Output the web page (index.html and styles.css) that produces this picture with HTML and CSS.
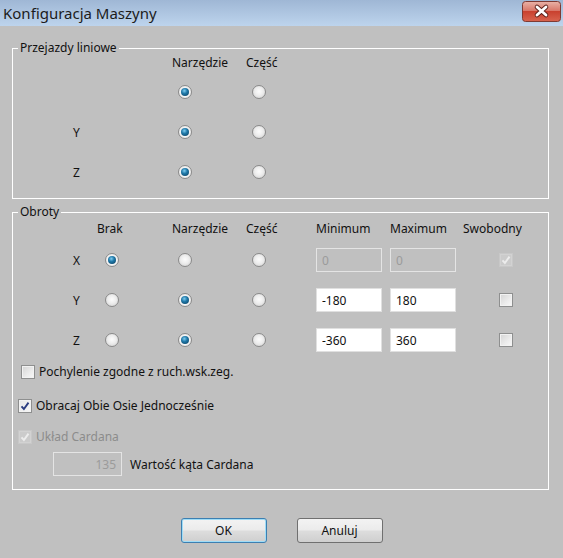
FILE: index.html
```html
<!DOCTYPE html>
<html lang="pl">
<head>
<meta charset="utf-8">
<title>Konfiguracja Maszyny</title>
<link rel="stylesheet" href="styles.css">
</head>
<body>
<div class="titlebar">
  <span class="title">Konfiguracja Maszyny</span>
  <span class="close">
    <svg width="39" height="21" viewBox="0 0 39 21">
      <defs>
        <linearGradient id="cg" x1="0" y1="0" x2="0" y2="1">
          <stop offset="0" stop-color="#e9b3a8"/>
          <stop offset="0.45" stop-color="#d9786a"/>
          <stop offset="0.5" stop-color="#c9412f"/>
          <stop offset="1" stop-color="#d8644f"/>
        </linearGradient>
      </defs>
      <rect x="0.5" y="0.5" width="38" height="20" rx="3" fill="url(#cg)" stroke="#7e3a33"/>
      <path d="M15 6 L24 14 M24 6 L15 14" stroke="#5a1f18" stroke-width="4.6" stroke-linecap="round"/>
      <path d="M15 6 L24 14 M24 6 L15 14" stroke="#ffffff" stroke-width="2.8" stroke-linecap="round"/>
    </svg>
  </span>
</div>

<fieldset class="group g1">
  <legend>Przejazdy liniowe</legend>
  <div class="axes rows1">
    <span></span><span></span>
    <span class="hdr">Narzędzie</span><span class="hdr">Część</span>
    <span></span><span></span><span></span>

    <span></span><span></span>
    <span class="rc2"><i class="radio on"></i></span><span class="rc3"><i class="radio"></i></span>
    <span></span><span></span><span></span>

    <span class="lbl">Y</span><span></span>
    <span class="rc2"><i class="radio on"></i></span><span class="rc3"><i class="radio"></i></span>
    <span></span><span></span><span></span>

    <span class="lbl">Z</span><span></span>
    <span class="rc2"><i class="radio on"></i></span><span class="rc3"><i class="radio"></i></span>
    <span></span><span></span><span></span>
  </div>
</fieldset>

<fieldset class="group g2">
  <legend>Obroty</legend>
  <div class="axes rows2">
    <span></span>
    <span class="hdr">Brak</span><span class="hdr">Narzędzie</span><span class="hdr">Część</span>
    <span class="hdr">Minimum</span><span class="hdr">Maximum</span><span class="hdr">Swobodny</span>

    <span class="lbl">X</span>
    <span class="rc1"><i class="radio on"></i></span>
    <span class="rc2"><i class="radio"></i></span>
    <span class="rc3"><i class="radio"></i></span>
    <span><input class="tb dis" type="text" value="0" disabled></span>
    <span><input class="tb dis" type="text" value="0" disabled></span>
    <span class="cc"><i class="cb dis checked"><svg width="12" height="12" viewBox="0 0 12 12"><path d="M2.5 6.3 L4.9 9 L9.5 2.6" fill="none" stroke="#ececec" stroke-width="2"/></svg></i></span>

    <span class="lbl">Y</span>
    <span class="rc1"><i class="radio"></i></span>
    <span class="rc2"><i class="radio on"></i></span>
    <span class="rc3"><i class="radio"></i></span>
    <span><input class="tb" type="text" value="-180"></span>
    <span><input class="tb" type="text" value="180"></span>
    <span class="cc"><i class="cb"></i></span>

    <span class="lbl">Z</span>
    <span class="rc1"><i class="radio"></i></span>
    <span class="rc2"><i class="radio on"></i></span>
    <span class="rc3"><i class="radio"></i></span>
    <span><input class="tb" type="text" value="-360"></span>
    <span><input class="tb" type="text" value="360"></span>
    <span class="cc"><i class="cb"></i></span>
  </div>

  <div class="opt opt1"><i class="cb"></i><span>Pochylenie zgodne z ruch.wsk.zeg.</span></div>
  <div class="opt opt2"><i class="cb checked"><svg width="12" height="12" viewBox="0 0 12 12"><path d="M2.5 6.3 L4.9 9 L9.5 2.6" fill="none" stroke="#2b3d80" stroke-width="1.9"/></svg></i><span>Obracaj Obie Osie Jednocześnie</span></div>
  <div class="opt opt3 disabled"><i class="cb dis checked"><svg width="12" height="12" viewBox="0 0 12 12"><path d="M2.5 6.3 L4.9 9 L9.5 2.6" fill="none" stroke="#ececec" stroke-width="2"/></svg></i><span>Układ Cardana</span></div>
  <div class="opt opt4"><input class="tb dis num" type="text" value="135" disabled><span>Wartość kąta Cardana</span></div>
</fieldset>

<div class="buttons">
  <button class="btn default">OK</button>
  <button class="btn">Anuluj</button>
</div>
</body>
</html>
```

FILE: styles.css
```css
html, body {
  margin: 0;
  padding: 0;
}

body {
  width: 563px;
  height: 558px;
  overflow: hidden;
  background: #c0c0c0;
  font-family: "Noto Sans", "Open Sans", sans-serif;
  font-size: 12px;
  color: #111111;
}

.titlebar {
  height: 26px;
  box-sizing: border-box;
  padding: 0 2px 0 3px;
  display: flex;
  align-items: center;
  justify-content: space-between;
  background: linear-gradient(#9fb7d5, #bdd4ed);
}

.title {
  font-size: 15px;
  color: #1c1c1c;
  line-height: 20px;
}

.close {
  display: block;
  height: 21px;
  align-self: flex-start;
  margin-top: 1px;
}

.close svg {
  display: block;
}

.group {
  margin: 0 14px 0 12px;
  padding: 0 0 6px 0;
  border: 1px solid #ffffff;
  min-width: 0;
}

.group legend {
  margin-left: 5px;
  padding: 0 2px;
  line-height: 16px;
  height: 16px;
}

.g1 {
  margin-top: 14px;
}

.g2 {
  margin-top: 5px;
  padding-bottom: 13px;
}

.axes {
  display: grid;
  grid-template-columns: 84px 75px 74px 70px 74px 73px 1fr;
  align-items: center;
}

.rows1 {
  grid-template-rows: 16px 40px 40px 40px;
}

.rows2 {
  margin-top: 2px;
  grid-template-rows: 18px 40px 40px 40px;
}

.hdr {
  align-self: start;
  line-height: 14px;
}

.lbl {
  padding-left: 60px;
}

.rc1 { padding-left: 8px; }
.rc2 { padding-left: 6px; }
.rc3 { padding-left: 6px; }
.cc { padding-left: 36px; }

.rc1, .rc2, .rc3, .cc {
  display: flex;
  align-items: center;
}

.radio {
  display: block;
  width: 14px;
  height: 14px;
  box-sizing: border-box;
  border-radius: 50%;
  border: 1px solid #8a8a8a;
  background: radial-gradient(circle at 50% 45%, #fcfcfc 0%, #ededed 45%, #cdcdcd 100%);
  position: relative;
}

.radio.on {
  background: radial-gradient(circle, #ffffff 0%, #f4f4f4 55%, #d6d6d6 100%);
}

.radio.on::after {
  content: "";
  position: absolute;
  left: 2px;
  top: 2px;
  width: 8px;
  height: 8px;
  border-radius: 50%;
  background: radial-gradient(circle at 42% 35%, #7fcdf0 0%, #1f78a8 40%, #0b3c5a 100%);
}

.cb {
  display: block;
  width: 14px;
  height: 14px;
  box-sizing: border-box;
  border: 1px solid #8e8f8f;
  background: linear-gradient(135deg, #d4d4d4 0%, #ececec 60%, #f8f8f8 100%);
  box-shadow: inset 0 0 0 1px #f2f2f2;
  flex: none;
}

.cb svg {
  display: block;
}

.cb.checked {
  background: linear-gradient(135deg, #e6e6e6 0%, #f6f6f6 100%);
}

.cb.dis {
  border-color: #c8c8c8;
  background: #cbcbcb;
  box-shadow: inset 0 0 0 1px #d2d2d2;
}

.tb {
  display: block;
  box-sizing: border-box;
  width: 66px;
  height: 24px;
  margin: 0;
  padding: 0 5px;
  border: 1px solid #e0e0e0;
  background: #ffffff;
  font: inherit;
  color: #111111;
  outline: none;
}

.tb.dis {
  background: #c0c0c0;
  border-color: #e4e4e4;
  color: #9b9b9b;
}

.tb.num {
  text-align: right;
  width: 69px;
}

.opt {
  display: flex;
  align-items: center;
  gap: 4px;
  height: 19px;
}

.opt1 {
  margin-top: 2px;
  padding-left: 8px;
}

.opt2 {
  margin-top: 15px;
  padding-left: 5px;
}

.opt3 {
  margin-top: 12px;
  padding-left: 5px;
}

.opt4 {
  margin-top: 6px;
  height: 24px;
  padding-left: 40px;
  gap: 8px;
}

.disabled {
  color: #8c8c8c;
}

.buttons {
  display: flex;
  justify-content: center;
  gap: 30px;
  margin-top: 28px;
}

.btn {
  width: 86px;
  height: 25px;
  box-sizing: border-box;
  border: 1px solid #707070;
  border-radius: 3px;
  background: linear-gradient(#f3f3f3 0%, #ebebeb 48%, #dddddd 52%, #cfcfcf 100%);
  font: inherit;
  color: #111111;
  padding: 0;
}

.btn.default {
  border-color: #3c7fb1;
  box-shadow: inset 0 0 0 1px #9fdcf6;
}
```
